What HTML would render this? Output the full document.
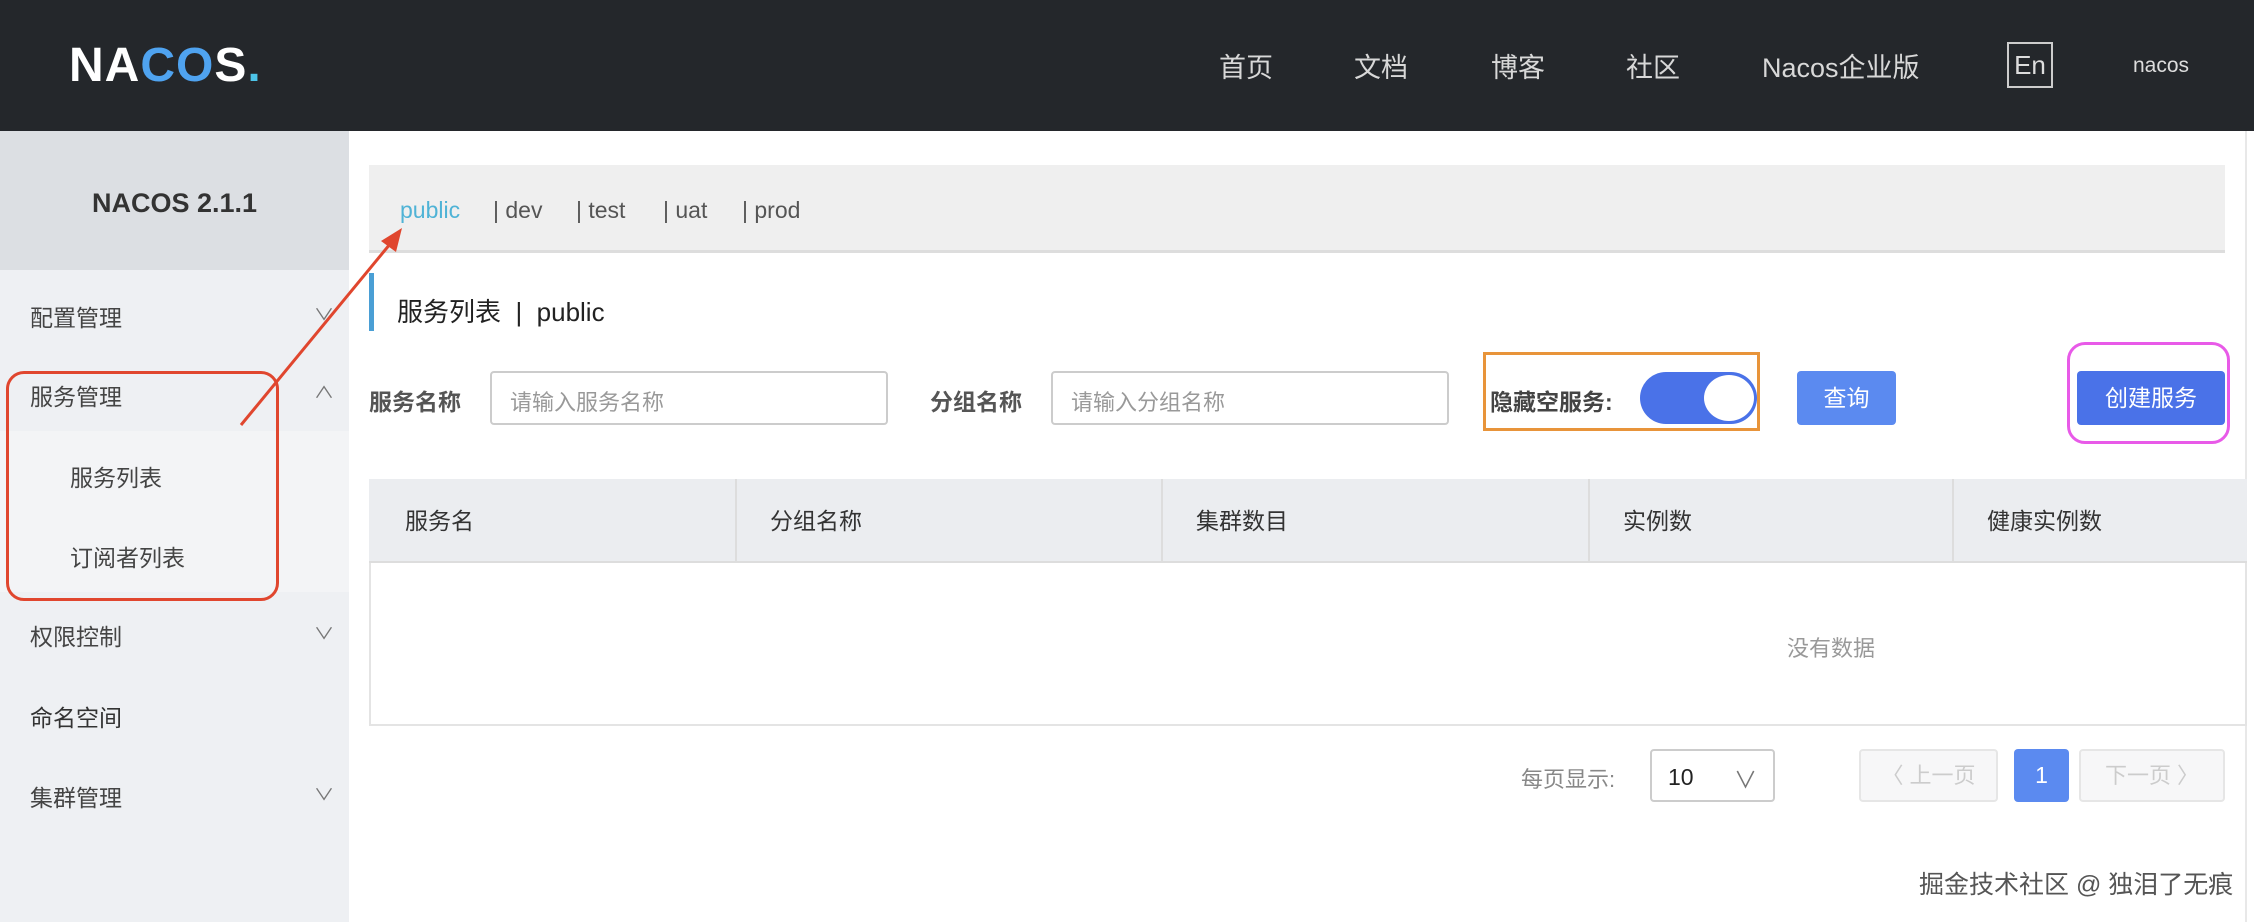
<!DOCTYPE html>
<html><head><meta charset="utf-8"><style>
*{margin:0;padding:0;box-sizing:border-box}
body{width:2254px;height:922px;position:relative;overflow:hidden;background:#fff;font-family:"Liberation Sans","Noto Sans CJK SC",sans-serif;color:#333}
.a{position:absolute}
.hdr{left:0;top:0;width:2254px;height:131px;background:#24272b}
.nav{top:46px;font-size:27px;color:#d8d8d8}
.side{left:0;top:131px;width:349px;height:791px;background:#eef0f3}
.mi{left:30px;font-size:23px;color:#444}
.chev{left:316px;font-size:16px;color:#777;transform:scaleX(1.3)}
.inp{height:54px;border:2px solid #ccc;border-radius:4px;background:#fff;font-size:22px;color:#999;padding:12px 18px}
.lbl{font-size:23px;font-weight:bold;color:#555}
.th{top:479px;height:84px;font-size:23px;color:#333;line-height:84px}
</style></head><body>
<div class="a hdr"></div>
<div class="a" style="left:69px;top:38px;font-size:48px;font-weight:bold;color:#fff;letter-spacing:1px">NA<span style="color:#4fa3f0">CO</span>S<span style="color:#4dc4e8">.</span></div>
<div class="a nav" style="left:1219px">首页</div>
<div class="a nav" style="left:1354px">文档</div>
<div class="a nav" style="left:1491px">博客</div>
<div class="a nav" style="left:1626px">社区</div>
<div class="a nav" style="left:1762px">Nacos企业版</div>
<div class="a" style="left:2007px;top:42px;width:46px;height:46px;border:2px solid #ccc;color:#ddd;font-size:26px;text-align:center;line-height:42px">En</div>
<div class="a" style="left:2133px;top:54px;font-size:21px;color:#ddd">nacos</div>

<div class="a side"></div>
<div class="a" style="left:0;top:131px;width:349px;height:139px;background:#dcdfe3"></div>
<div class="a" style="left:0;top:188px;width:349px;font-size:27px;font-weight:bold;text-align:center;color:#333">NACOS 2.1.1</div>
<div class="a" style="left:0;top:431px;width:349px;height:161px;background:#f3f4f6"></div>
<div class="a mi" style="top:299px">配置管理</div><div class="a chev" style="top:301px">∨</div>
<div class="a mi" style="top:378px">服务管理</div><div class="a chev" style="top:379px">∧</div>
<div class="a mi" style="left:70px;top:459px">服务列表</div>
<div class="a mi" style="left:70px;top:539px">订阅者列表</div>
<div class="a mi" style="top:618px">权限控制</div><div class="a chev" style="top:620px">∨</div>
<div class="a mi" style="top:699px;color:#333">命名空间</div>
<div class="a mi" style="top:779px">集群管理</div><div class="a chev" style="top:781px">∨</div>
<div class="a" style="left:2245px;top:131px;width:2px;height:791px;background:#e8e8e8"></div>

<div class="a" style="left:369px;top:165px;width:1856px;height:88px;background:#efefef;border-bottom:3px solid #ddd"></div>
<div class="a" style="left:400px;top:197px;font-size:23px;color:#4fb3d6">public</div>
<div class="a" style="left:493px;top:197px;font-size:23px;color:#555">| dev</div>
<div class="a" style="left:576px;top:197px;font-size:23px;color:#555">| test</div>
<div class="a" style="left:663px;top:197px;font-size:23px;color:#555">| uat</div>
<div class="a" style="left:742px;top:197px;font-size:23px;color:#555">| prod</div>

<div class="a" style="left:369px;top:273px;width:5px;height:58px;background:#4a9fd5"></div>
<div class="a" style="left:397px;top:292px;font-size:26px;color:#222">服务列表 &nbsp;|&nbsp; public</div>

<div class="a lbl" style="left:369px;top:383px">服务名称</div>
<div class="a inp" style="left:490px;top:371px;width:398px">请输入服务名称</div>
<div class="a lbl" style="left:930px;top:383px">分组名称</div>
<div class="a inp" style="left:1051px;top:371px;width:398px">请输入分组名称</div>
<div class="a" style="left:1483px;top:352px;width:277px;height:79px;border:3px solid #e8943a"></div>
<div class="a lbl" style="left:1490px;top:383px;color:#444">隐藏空服务:</div>
<div class="a" style="left:1640px;top:372px;width:117px;height:52px;border-radius:26px;background:#4a72e8"></div>
<div class="a" style="left:1704px;top:375px;width:50px;height:46px;border-radius:50%;background:#fff"></div>
<div class="a" style="left:1797px;top:371px;width:99px;height:54px;background:#5b8af0;border-radius:4px;color:#fff;font-size:23px;text-align:center;line-height:54px">查询</div>
<div class="a" style="left:2067px;top:342px;width:163px;height:102px;border:3px solid #e85ae8;border-radius:18px"></div>
<div class="a" style="left:2077px;top:371px;width:148px;height:54px;background:#4a72e8;border-radius:4px;color:#fff;font-size:23px;text-align:center;line-height:54px">创建服务</div>

<div class="a" style="left:369px;top:479px;width:1878px;height:247px;border:2px solid #e4e4e4"></div>
<div class="a" style="left:369px;top:479px;width:1878px;height:84px;background:#ebedf0;border-bottom:2px solid #ddd"></div>
<div class="a" style="left:735px;top:479px;width:2px;height:84px;background:#ddd"></div>
<div class="a" style="left:1161px;top:479px;width:2px;height:84px;background:#ddd"></div>
<div class="a" style="left:1588px;top:479px;width:2px;height:84px;background:#ddd"></div>
<div class="a" style="left:1952px;top:479px;width:2px;height:84px;background:#ddd"></div>
<div class="a th" style="left:405px">服务名</div>
<div class="a th" style="left:770px">分组名称</div>
<div class="a th" style="left:1196px">集群数目</div>
<div class="a th" style="left:1623px">实例数</div>
<div class="a th" style="left:1987px">健康实例数</div>
<div class="a" style="left:1787px;top:631px;font-size:22px;color:#999">没有数据</div>

<div class="a" style="left:1521px;top:762px;font-size:22px;color:#888">每页显示:</div>
<div class="a" style="left:1650px;top:749px;width:125px;height:53px;border:2px solid #ccc;border-radius:4px;font-size:23px;padding:13px 16px;color:#222">10<span style="position:absolute;right:16px;top:10px;color:#777">∨</span></div>
<div class="a" style="left:1859px;top:749px;width:139px;height:53px;border:2px solid #e6e6e6;border-radius:4px;background:#f7f7f8;font-size:22px;color:#ccc;text-align:center;line-height:49px">〈 上一页</div>
<div class="a" style="left:2014px;top:749px;width:55px;height:53px;background:#5b8af0;border-radius:4px;color:#fff;font-size:23px;text-align:center;line-height:53px">1</div>
<div class="a" style="left:2079px;top:749px;width:146px;height:53px;border:2px solid #e6e6e6;border-radius:4px;background:#f7f7f8;font-size:22px;color:#ccc;text-align:center;line-height:49px">下一页 〉</div>
<div class="a" style="left:1919px;top:865px;font-size:25px;color:#555">掘金技术社区 @ 独泪了无痕</div>

<div class="a" style="left:6px;top:371px;width:273px;height:230px;border:3px solid #e0462e;border-radius:18px"></div>
<svg class="a" style="left:0;top:0" width="2254" height="922"><line x1="241" y1="425" x2="395" y2="238" stroke="#e0462e" stroke-width="3"/><polygon points="402,228 381,241 396,252" fill="#e0462e"/></svg>
</body></html>
